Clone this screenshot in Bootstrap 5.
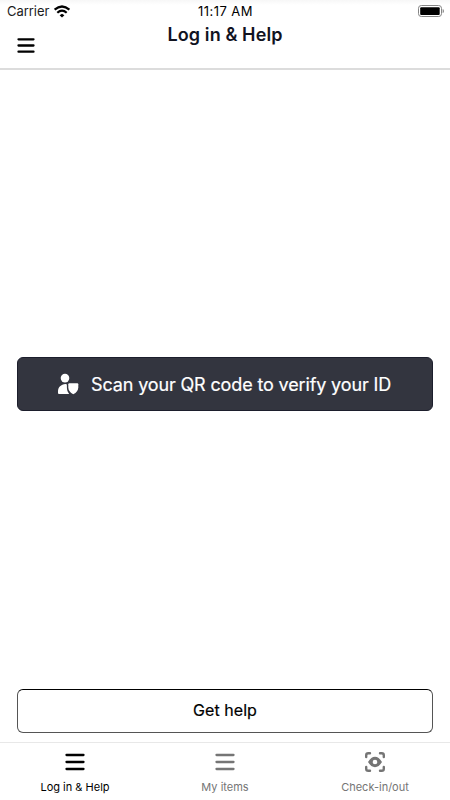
<!DOCTYPE html>
<html lang="en">
<head>
<meta charset="utf-8">
<meta name="viewport" content="width=device-width, initial-scale=1">
<title>Log in &amp; Help</title>
<link href="https://cdn.jsdelivr.net/npm/bootstrap@5.3.0/dist/css/bootstrap.min.css" rel="stylesheet">
<style>
  body { font-family: Inter, "Liberation Sans", sans-serif; color: #000; background: #fff; }
  svg { display: block; flex: none; }
  .screen { height: 800px; overflow: hidden; }
  .app-header { height: 70px; border-bottom: 2px solid #dcdcdc; background: linear-gradient(#f7f7f7, #fff 5px); }
  .status-bar { height: 23px; font-size: 13px; line-height: 23px; padding: 0 6px 0 7px; }
  .carrier { letter-spacing: -.05px; color: #1c1c1c; }
  .wifi { margin-left: 4px; }
  .clock { letter-spacing: .43px; }
  .title-row { height: 45px; padding: 0 17px; }
  .page-title { font-size: 18px; line-height: 23px; font-weight: 600; color: #11131f; letter-spacing: .12px; }
  .menu-btn { margin-top: 14px; }
  .scan-btn { height: 54px; border: 1px solid #1c1e2c; background: #33353f; color: #fff; border-radius: 6px; font-size: 18px; font-weight: 400; }
  .scan-label { letter-spacing: -.14px; margin-right: 2px; -webkit-text-stroke: .2px #fff; }
  .help-btn { height: 44px; padding: 0 0 2px; border: 1px solid #555; border-top-color: #000; border-radius: 6px; color: #000; background: #fff; font-size: 16px; font-weight: 400; letter-spacing: .06px; -webkit-text-stroke: .2px #000; }
  .main-area { padding: 0 17px; }
  .gap-mid { height: 278px; }
  .gap-end { height: 9px; }
  .tab-bar { height: 58px; border-top: 1px solid #e8e8e8; }
  .tab-bar .tab { color: #757575; font-size: 11px; line-height: 14px; padding-top: 8px; }
  .tab-bar .tab.current { color: #000; }
  .tab-label { margin-top: 7px; }
</style>
<script src="https://cdn.jsdelivr.net/npm/bootstrap@5.3.0/dist/js/bootstrap.bundle.min.js"></script>
</head>
<body>
<div class="screen d-flex flex-column">
  <header class="app-header flex-shrink-0">
    <div class="status-bar row g-0">
      <div class="col d-flex align-items-center">
        <span class="carrier">Carrier</span>
        <svg class="wifi" width="18" height="14" viewBox="0 0 18 14" fill="none" stroke="#000" stroke-width="2.2"><path d="M1.600 4.700Q9-1.700 16.400 4.700M4.300 7.700Q9 3.500 13.700 7.700"/><path d="M9 8.700 11.400 10.300 9 12.600 6.600 10.300Z" fill="#000" stroke="none"/></svg>
      </div>
      <div class="col-auto clock">11:17 AM</div>
      <div class="col d-flex align-items-center justify-content-end">
        <svg width="27" height="13" viewBox="0 0 27 13"><rect x="1.500" y=".500" width="23" height="11" rx="2.800" fill="#fff" stroke="#858585"/><rect x="3.200" y="2.200" width="19.500" height="7.800" rx="1" fill="#000"/><path d="M26 4.400Q27 6 26 7.700Z" fill="#555" stroke="#777" stroke-width=".5"/></svg>
      </div>
    </div>
    <div class="title-row row g-0">
      <div class="col">
        <svg class="menu-btn" width="18" height="17" viewBox="0 0 18 17" stroke="#000" stroke-width="2.300" stroke-linecap="round"><path d="M1.500 2.300H16.500M1.500 8.500H16.500M1.500 14.700H16.500"/></svg>
      </div>
      <h1 class="page-title col-auto mb-0">Log in &amp; Help</h1>
      <div class="col"></div>
    </div>
  </header>

  <main class="main-area flex-grow-1 d-flex flex-column">
    <div class="flex-grow-1"></div>
    <button class="scan-btn btn w-100 p-0 d-flex align-items-center justify-content-center flex-shrink-0" type="button">
      <svg class="me-2" width="26" height="24" viewBox="0 0 26 24" fill="#fff"><circle cx="8" cy="6.100" r="4.300"/><path d="M1 21V19.500C1 15.400 4 12.400 8.500 12.100C9.300 12.050 9.900 12.500 9.900 13.300V15.500C9.900 18 10.700 20 12 21.700V22H2Q1 22 1 21Z"/><path d="M12.300 11.300H20.300Q21.300 11.300 21.300 12.300V15.300C21.300 18.500 19.500 20.700 16.300 22.300C13.100 20.700 11.300 18.500 11.300 15.300V12.300Q11.300 11.300 12.300 11.300Z"/></svg>
      <span class="scan-label">Scan your QR code to verify your ID</span>
    </button>
    <div class="gap-mid flex-shrink-0"></div>
    <button class="help-btn btn w-100 flex-shrink-0" type="button">Get help</button>
    <div class="gap-end flex-shrink-0"></div>
  </main>

  <nav class="tab-bar row g-0 flex-shrink-0">
    <div class="tab current col d-flex flex-column align-items-center">
      <svg width="22" height="22" viewBox="0 0 22 22" stroke="currentColor" stroke-width="2.300" stroke-linecap="round"><path d="M2.500 4H19.500M2.500 11H19.500M2.500 18H19.500"/></svg>
      <span class="tab-label">Log in &amp; Help</span>
    </div>
    <div class="tab col d-flex flex-column align-items-center">
      <svg width="22" height="22" viewBox="0 0 22 22" stroke="currentColor" stroke-width="2.300" stroke-linecap="round"><path d="M2.500 4H19.500M2.500 11H19.500M2.500 18H19.500"/></svg>
      <span class="tab-label">My items</span>
    </div>
    <div class="tab col d-flex flex-column align-items-center">
      <svg width="22" height="22" viewBox="0 0 22 22" fill="none" stroke="currentColor" stroke-width="2.400" stroke-linecap="round" stroke-linejoin="round"><path d="M2.200 6V4.300Q2.200 2.200 4.300 2.200H6M16 2.200H17.700Q19.800 2.200 19.800 4.300V6M19.800 16V17.700Q19.800 19.800 17.700 19.800H16M6 19.800H4.300Q2.200 19.800 2.200 17.700V16"/><path d="M4 11Q7.200 5.800 11 5.800T18 11Q14.800 16.200 11 16.200T4 11ZM11 8.700A2.300 2.300 0 1 0 11 13.300A2.300 2.300 0 1 0 11 8.700Z" fill="currentColor" fill-rule="evenodd" stroke="none"/></svg>
      <span class="tab-label">Check-in/out</span>
    </div>
  </nav>
</div>
</body>
</html>
